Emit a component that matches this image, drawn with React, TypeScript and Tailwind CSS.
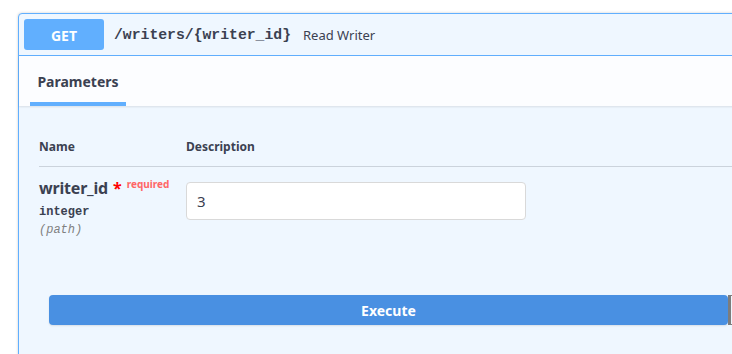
export default function App() {
  const sans = { fontFamily: '"Noto Sans", "Open Sans", sans-serif' };
  const mono = { fontFamily: '"Liberation Mono", "DejaVu Sans Mono", monospace' };
  return (
    <div className="h-[354px] w-[732px] overflow-hidden bg-white pl-[18px] pt-[13px]" style={sans}>
      <div className="w-[760px] h-[400px] rounded-[4px] border border-[#61affe] bg-[#eff7ff] shadow-[0_0_3px_rgba(0,0,0,0.19)]">
        {/* summary */}
        <div className="flex items-center border-b border-[#61affe] p-[5px]">
          <div className="flex h-[31px] w-[80px] items-center justify-center rounded-[3px] bg-[#61affe] pt-[1px] text-[14px] font-bold text-white">
            GET
          </div>
          <span className="ml-[10px] pt-[2px] text-[14.75px] font-semibold text-[#3b4151]" style={mono}>
            /writers/&#123;writer_id&#125;
          </span>
          <span className="ml-[12px] pt-[2px] text-[13px] text-[#3b4151]">Read Writer</span>
        </div>

        {/* tab header */}
        <div className="flex h-[50px] items-end bg-[#fcfdff] pl-[11px] shadow-[0_1px_2px_rgba(0,0,0,0.1)]">
          <div className="flex w-[96px] flex-col items-center">
            <h4 className="pb-[10px] text-[14px] font-bold leading-[20px] text-[#3b4151]">Parameters</h4>
            <div className="h-[4px] w-full bg-[#61affe]" />
          </div>
        </div>

        {/* table */}
        <div className="px-[20px] pt-[21px]">
          <div className="flex border-b border-[#cbd3dc] py-[12px] text-[12px] font-bold leading-[15px] text-[#3b4151]">
            <div className="w-[147px]">Name</div>
            <div>Description</div>
          </div>
          <div className="flex pt-[10px]">
            <div className="w-[147px]">
              <div className="flex items-start text-[#3b4151]">
                <span className="text-[16px] font-bold leading-[22px] tracking-[-0.2px]">writer_id</span>
                <span className="ml-[5px] text-[16px] font-bold leading-[22px] text-[#ff0000]">*</span>
                <span className="ml-[5px] text-[10px] font-bold leading-[14px] text-[#ff6666]">required</span>
              </div>
              <div className="mt-[4px] text-[12px] font-bold leading-[18px] text-[#3b4151]" style={mono}>
                integer
              </div>
              <div className="text-[12px] italic leading-[18px] text-[#808080]" style={mono}>
                (path)
              </div>
            </div>
            <div className="pt-[5px]">
              <input
                defaultValue="3"
                className="h-[38px] w-[340px] rounded-[4px] border border-[#d9d9d9] bg-white px-[10px] text-[15px] text-[#3b4151] outline-none"
              />
            </div>
          </div>
        </div>

        {/* execute */}
        <div className="mt-[56px] flex pl-[30px]">
          <button className="h-[30px] w-[679px] rounded-[4px] bg-[#4990e2] text-[14px] font-bold text-white shadow-[0_1px_2px_rgba(0,0,0,0.1)]">
            Execute
          </button>
          <div className="h-[30px] w-[20px] border-l-[3px] border-t border-b border-[#7d7d7d] bg-[#eff7ff]" />
        </div>
      </div>
    </div>
  );
}
